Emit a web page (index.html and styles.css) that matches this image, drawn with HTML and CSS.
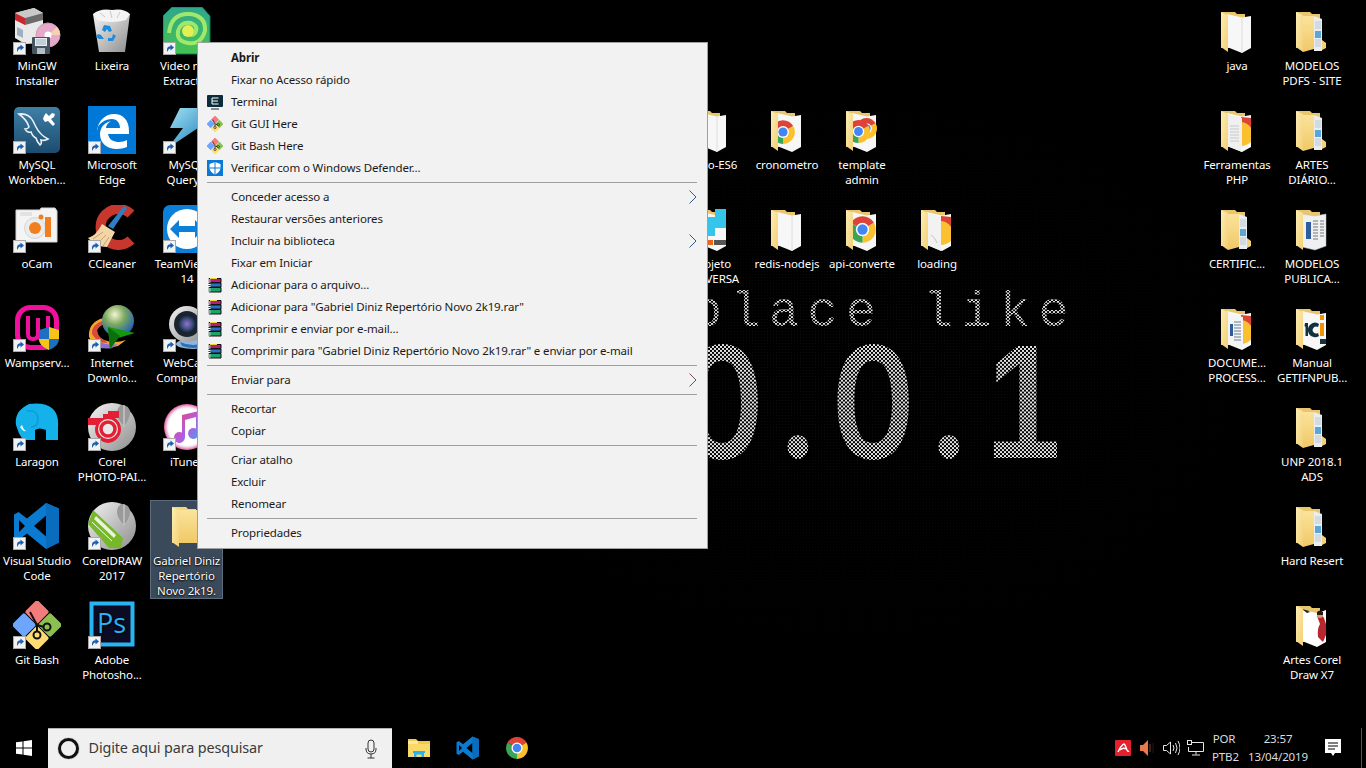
FILE: index.html
```html
<!DOCTYPE html>
<html lang="pt-BR">
<head>
    <meta charset="UTF-8" />
    <title>Área de Trabalho</title>
    <link rel="stylesheet" href="styles.css">
</head>
<body>
    <!-- icon sprite -->
    <svg class="sprite" aria-hidden="true">
        <defs>
            <linearGradient id="g-flap" x1="0" y1="0" x2="1" y2="1"><stop offset="0" stop-color="#fdeeb4"/><stop offset="1" stop-color="#f3cf74"/></linearGradient>
            <linearGradient id="g-mid" x1="0" y1="0" x2="0" y2="1"><stop offset="0" stop-color="#fbe39c"/><stop offset="1" stop-color="#f0c866"/></linearGradient>
            <linearGradient id="g-silver" x1="0" y1="0" x2="1" y2="1"><stop offset="0" stop-color="#f4f4f4"/><stop offset="1" stop-color="#8d8d8d"/></linearGradient>
            <linearGradient id="g-mysql" x1="0" y1="0" x2="0" y2="1"><stop offset="0" stop-color="#3f7fa6"/><stop offset="1" stop-color="#1c4c6f"/></linearGradient>
            <linearGradient id="g-bolt" x1="0" y1="0" x2="1" y2="1"><stop offset="0" stop-color="#a5e3f5"/><stop offset="1" stop-color="#1478b4"/></linearGradient>
            <linearGradient id="g-video" x1="0" y1="0" x2="0" y2="1"><stop offset="0" stop-color="#2fa68c"/><stop offset="1" stop-color="#45c34f"/></linearGradient>
            <radialGradient id="g-lens" cx=".5" cy=".5" r=".5"><stop offset="0" stop-color="#9a6fd0"/><stop offset=".6" stop-color="#3c4f7c"/><stop offset="1" stop-color="#16202e"/></radialGradient>
            <radialGradient id="g-globe" cx=".4" cy=".3" r=".8"><stop offset="0" stop-color="#f4f4d0"/><stop offset=".4" stop-color="#7aa860"/><stop offset=".8" stop-color="#2f6aa8"/><stop offset="1" stop-color="#1e3f78"/></radialGradient>
            <radialGradient id="g-tune" cx=".5" cy=".5" r=".5"><stop offset=".76" stop-color="#fff"/><stop offset=".84" stop-color="#f4f0f6"/><stop offset="1" stop-color="#e85aa0"/></radialGradient>
            <linearGradient id="g-note" x1="0" y1="0" x2="1" y2="1"><stop offset="0" stop-color="#f2486a"/><stop offset=".55" stop-color="#b25ae0"/><stop offset="1" stop-color="#42a5ef"/></linearGradient>
        </defs>

        <symbol id="sc" viewBox="0 0 48 48">
            <rect x="0.5" y="35.5" width="12" height="12" fill="#f2f2f2" stroke="#a9a9a9"/>
            <path d="M4 45v-2.500q0-3 3.500-3.200V37.500l3.500 3-3.500 3v-2q-2 .1-2.300 1.700z" fill="#1a5fb4"/>
        </symbol>

        <symbol id="chrome" viewBox="0 0 48 48">
            <path d="M24 24 5 13A22 22 0 0 1 43 13Z" fill="#db4437"/>
            <path d="M24 24 43 13A22 22 0 0 1 24 46Z" fill="#fbc02d"/>
            <path d="M24 24V46A22 22 0 0 1 5 13Z" fill="#3aa655"/>
            <circle cx="24" cy="24" r="11" fill="#fff"/>
            <circle cx="24" cy="24" r="8.500" fill="#4285f4"/>
        </symbol>

        <symbol id="git" viewBox="0 0 48 48">
            <g transform="rotate(45 24 24)">
                <rect x="6" y="6" width="17.500" height="17.500" rx="2" fill="#f27c7c"/>
                <rect x="24.500" y="6" width="17.500" height="17.500" rx="2" fill="#8cc152"/>
                <rect x="24.500" y="24.500" width="17.500" height="17.500" rx="2" fill="#ffdc73"/>
                <rect x="6" y="24.500" width="17.500" height="17.500" rx="2" fill="#6ea6ff"/>
            </g>
            <path d="M17 11 24 24l7 2M24 24v6" fill="none" stroke="#111" stroke-width="2"/>
            <circle cx="34" cy="26" r="3.500" fill="#8cc152" stroke="#111" stroke-width="2"/>
            <circle cx="24" cy="34" r="3.500" fill="#ffdc73" stroke="#111" stroke-width="2"/>
        </symbol>

        <symbol id="code" viewBox="0 0 48 48">
            <path fill-rule="evenodd" d="M33 1 46 6.500V40.500L33 47 14 31.500 5.500 38 1 35.500V12.500L5.500 10 14 16.500ZM33 13.500 21 24 33 34.500ZM6 18V30L12 24Z" fill="#0a7bd0"/>
            <path d="M33 1 46 6.500V40.500L33 47Z" fill="#0a6cbc"/>
        </symbol>

        <symbol id="rar" viewBox="0 0 16 16">
            <path d="M2 1.500h12v4H2z" fill="#b01e78" stroke="#111"/>
            <path d="M2 6h12v4H2z" fill="#2a6fc0" stroke="#111"/>
            <path d="M2 10.500h12v4.500H2z" fill="#1ea268" stroke="#111"/>
            <path d="M0.500 3h3M0.500 5h3M0.500 7.500h3M0.500 9.500h3M0.500 12h3M0.500 14h3" stroke="#fff" stroke-width="1"/>
            <path d="M3 1h7v1H3z" fill="#f2d23c"/>
        </symbol>

        <!-- folders: back, contents, front flap -->
        <symbol id="f-base" viewBox="0 0 48 48">
            <path d="M8 5h14l2 2h8v34H8z" fill="#e9c56c"/>
        </symbol>
        <symbol id="f-flap" viewBox="0 0 48 48">
            <path d="M8 5 15 8V45L8 40Z" fill="url(#g-flap)"/>
        </symbol>
        <symbol id="f-paper" viewBox="0 0 48 48">
            <use href="#f-base"/>
            <path d="M14 7 29 10.500 38 9V41L29 46 14 40Z" fill="#f7f7f7"/>
            <path d="M29 10.500V46" stroke="#dedede" fill="none"/>
            <use href="#f-flap"/>
        </symbol>
        <symbol id="f-strip" viewBox="0 0 48 48">
            <use href="#f-base"/>
            <path d="M26 9 34 12V44L26 44Z" fill="#e9edf0"/>
            <path d="M27 15h6M27 17h6M27 19h6M27 21h6" stroke="#b9c8d2"/>
            <path d="M27 24h6v7h-6z" fill="#5aa6d6"/>
            <path d="M27 33h6M27 35h6M27 37h6M27 39h6" stroke="#b9c8d2"/>
            <path d="M15 9h11V42L15 45Z" fill="url(#g-mid)"/>
            <path d="M34 33 38 36V41L34 43Z" fill="#f3d27a"/>
            <use href="#f-flap"/>
        </symbol>
        <symbol id="f-chrome" viewBox="0 0 48 48">
            <use href="#f-base"/>
            <path d="M14 7 29 10.500 38 9V41L29 46 14 40Z" fill="#f7f7f7"/>
            <use href="#chrome" x="10" y="10" width="29" height="29"/>
            <use href="#f-flap"/>
        </symbol>
        <symbol id="f-small" viewBox="0 0 48 48">
            <use href="#f-base"/>
            <path d="M14 7 29 10.500 38 9V41L29 46 14 40Z" fill="#f7f7f7"/>
            <use href="#chrome" x="7" y="13" width="26" height="26"/>
            <use href="#f-flap"/>
        </symbol>
        <symbol id="f-tmpl" viewBox="0 0 48 48">
            <use href="#f-base"/>
            <path d="M14 7 29 10.500 38 9V41L29 46 14 40Z" fill="#f7f7f7"/>
            <use href="#chrome" x="17" y="10" width="23" height="25"/>
            <use href="#chrome" x="8" y="13" width="25" height="25"/>
            <use href="#f-flap"/>
        </symbol>
        <symbol id="f-half" viewBox="0 0 48 48">
            <use href="#f-base"/>
            <path d="M14 7 29 10.500 38 9V41L29 46 14 40Z" fill="#f7f7f7"/>
            <path d="M28 14A13 13 0 0 1 38 22V36Q33 40 28 40Z" fill="#fbc02d"/>
            <path d="M28 11 38 12V22A13 13 0 0 0 28 16Z" fill="#db4437"/>
            <path d="M14 8 28 12V46L14 40Z" fill="#f2f2f2"/>
            <path d="M18 30q4 2 6 8" stroke="#c8c8c8" fill="none"/>
            <use href="#f-flap"/>
        </symbol>
        <symbol id="f-doc" viewBox="0 0 48 48">
            <use href="#f-base"/>
            <path d="M14 9 27 11 38 9V41L27 45 14 42Z" fill="#eef0f2" stroke="#bbb" stroke-width=".5"/>
            <path d="M18 17h5v17h-5z" fill="#2f5d9c"/>
            <path d="M25 16h5M25 19h5M25 22h5M25 25h5M25 28h5M25 31h5M25 34h5M32 16h4M32 19h4M32 22h4M32 25h4M32 28h4M32 31h4" stroke="#787878"/>
            <use href="#f-flap"/>
        </symbol>
        <symbol id="f-docc" viewBox="0 0 48 48">
            <use href="#f-base"/>
            <path d="M14 7 29 10.500 38 9V41L29 46 14 40Z" fill="#f7f7f7"/>
            <path d="M28 14A13 13 0 0 1 38 22V36Q33 40 28 40Z" fill="#fbc02d"/>
            <path d="M28 11 38 12V22A13 13 0 0 0 28 16Z" fill="#db4437"/>
            <path d="M14 10 30 13V44L14 40Z" fill="#f2f4f6"/>
            <path d="M17 20h3v12h-3z" fill="#2f5d9c"/>
            <path d="M21 18h7M21 21h7M21 24h7M21 27h7M21 30h7M21 33h7M21 36h7" stroke="#6f7f90"/>
            <use href="#f-flap"/>
        </symbol>
        <symbol id="f-php" viewBox="0 0 48 48">
            <use href="#f-base"/>
            <path d="M14 7 29 10.500 38 9V41L29 46 14 40Z" fill="#f7f7f7"/>
            <path d="M28 14A13 13 0 0 1 38 22V36Q33 40 28 40Z" fill="#fbc02d"/>
            <path d="M28 11 38 12V22A13 13 0 0 0 28 16Z" fill="#db4437"/>
            <path d="M14 8 29 12V46L14 40Z" fill="#f0f0f0"/>
            <path d="M17 20h9M17 23h9M17 26h9M17 29h9M17 32h9M17 35h9" stroke="#c8c8c8"/>
            <use href="#f-flap"/>
        </symbol>
        <symbol id="f-logo" viewBox="0 0 48 48">
            <use href="#f-base"/>
            <path d="M14 7 29 10.500 38 9V41L29 46 14 40Z" fill="#f7f7f7"/>
            <path d="M17 19h3V32h-2.500V23l-1-1zM23 20a6 6 0 0 1 8 0l-1 3a3.500 3.500 0 1 0 0 6l1 3a6 6 0 0 1-8-12z" fill="#12313f"/>
            <path d="M32 11h4v5h-4zM32 19h4V32h-4z" fill="#f39200"/>
            <path d="M32 35h6v5h-6z" fill="#12313f"/>
            <use href="#f-flap"/>
        </symbol>
        <symbol id="f-girl" viewBox="0 0 48 48">
            <use href="#f-base"/>
            <path d="M14 9 29 12 38 9V41L29 46 14 40Z" fill="#fff"/>
            <path d="M29 15q5-3 7 2l2 6V34L35 41 30 36Q29 28 32 23Z" fill="#b8272d"/>
            <circle cx="32" cy="14" r="3" fill="#d79d7b"/>
            <path d="M29 11q3-3 6 0v3h-6z" fill="#2a1a14"/>
            <path d="M14 8q5 1 8 3l-3 1z" fill="#222"/>
            <use href="#f-flap"/>
        </symbol>
        <symbol id="f-plus" viewBox="0 0 48 48">
            <use href="#f-base"/>
            <path d="M14 7 29 10.500 38 9V41L29 46 14 40Z" fill="#f7f7f7"/>
            <path d="M15 12h12V4h11v8v11H27v8H15z" fill="#36c5ea"/>
            <path d="M17 35h8v5h-8z" fill="#e9651b"/>
            <path d="M26 35h12v5H26z" fill="#555"/>
            <use href="#f-flap"/>
        </symbol>
    </svg>

    <!-- wallpaper -->
    <div class="wallpaper">
        <div class="wall-dust"></div>
        <div class="wall-small dots">place like</div>
        <div class="wall-big">
            <span class="dots">0</span>
            <span class="dots">.</span>
            <span class="dots">0</span>
            <span class="dots">.</span>
            <span class="dots">1</span>
        </div>
    </div>

    <!-- icones da area de trabalho -->
    <main class="desktop">
        <!-- coluna 1 -->
        <div class="item c0 r0"><svg class="ico" viewBox="0 0 48 48">
            <path d="M2 6 21 1 30 6V36L12 37 2 31Z" fill="#e9e9e9"/><path d="M2 6 21 1 30 6 12 11Z" fill="#c9c9c9"/><path d="M2 6 12 11V18L2 13Z" fill="#c9272d"/><path d="M12 11 30 6V13L12 18Z" fill="#6c6c6c"/><path d="M4 20l6 3v8l-6-3z" fill="#9fb0c0"/>
            <circle cx="35" cy="28" r="12" fill="#e7a9c9"/><circle cx="35" cy="28" r="12" fill="none" stroke="#c9a0b4"/><path d="M35 28 44 20A12 12 0 0 1 47 28Z" fill="#f6d2b0"/><circle cx="35" cy="28" r="3.500" fill="#fff"/>
            <rect x="19" y="30" width="18" height="17" rx="1" fill="#46545f"/><rect x="22" y="31" width="12" height="8" fill="#e8eef2"/><path d="M23 33h10M23 35h10M23 37h10" stroke="#9db0bc"/><rect x="24" y="41" width="8" height="6" fill="#b5bec4"/>
            <use href="#sc"/></svg><span>MinGW<br>Installer</span></div>
        <div class="item c0 r1"><svg class="ico" viewBox="0 0 48 48">
            <rect x="1" y="1" width="46" height="46" rx="5" fill="url(#g-mysql)"/>
            <path d="M6 8q10-1 14 7l3 6q4 8 12 12-3 2-7 1 1 4-1 5-3-3-4-7-3-1-5-6-4 1-6-3 3 0 4-2Q14 14 6 8Z" fill="none" stroke="#e8f1f6" stroke-width="1.600"/>
            <path d="M33 7l3 3 3-3 3 1-1 3-3 2 4 5-2 2-5-5-3 1-2-3 1-3z" fill="#fff"/>
            <use href="#sc"/></svg><span>MySQL<br>Workben...</span></div>
        <div class="item c0 r2"><svg class="ico" viewBox="0 0 48 48">
            <path d="M3 5H27l1-2H42l2 3V37H3Z" fill="#f4f4f4" stroke="#d4d4d4"/>
            <rect x="7" y="7" width="12" height="4" fill="#e2e2e2"/><circle cx="22" cy="23" r="10.500" fill="#ececec" stroke="#d6d6d6"/><circle cx="22" cy="23" r="6" fill="#f07f1f"/><circle cx="28" cy="12" r="2.500" fill="#f07f1f"/><rect x="32" y="12" width="6" height="20" fill="#f07f1f"/>
            <use href="#sc"/></svg><span>oCam</span></div>
        <div class="item c0 r3"><svg class="ico" viewBox="0 0 48 48">
            <rect x="4.500" y="3.500" width="39" height="40" rx="13" fill="none" stroke="#f0109c" stroke-width="5"/>
            <path d="M15 12V30Q15 35 20 35 25 35 25 30V14M25 30Q25 35 30 35 35 35 35 30V12" fill="none" stroke="#f0109c" stroke-width="4"/>
            <path d="M36 23l10 3v9q0 7-10 11-10-4-10-11v-9z" fill="#1d6fc4"/><path d="M36 23l10 3v9H36zM26 35H36V46q-10-4-10-11z" fill="#f5c518"/>
            <use href="#sc"/></svg><span>Wampserv...</span></div>
        <div class="item c0 r4"><svg class="ico" viewBox="0 0 48 48">
            <path d="M16 1Q32-1 40 6 46 12 45 24V37H33V27Q26 24 22 27V37H10Q5 30 3 22 1 8 16 1Z" fill="#14b1ea"/>
            <path d="M14 8Q24 6 25 16 25 24 18 24" fill="none" stroke="#0f9bd3" stroke-width="1.500"/>
            <path d="M7 24q3 5 6 4-3-2-4-6z" fill="#e9f8fd"/>
            <use href="#sc"/></svg><span>Laragon</span></div>
        <div class="item c0 r5"><svg class="ico" viewBox="0 0 48 48"><use href="#code"/><use href="#sc"/></svg><span>Visual Studio<br>Code</span></div>
        <div class="item c0 r6"><svg class="ico" viewBox="0 0 48 48"><use href="#git"/><use href="#sc"/></svg><span>Git Bash</span></div>

        <!-- coluna 2 -->
        <div class="item c1 r0"><svg class="ico" viewBox="0 0 48 48">
            <path d="M5 7 42 7 37 45H11Z" fill="url(#g-silver)"/>
            <path d="M5 7Q12 1 24 3 36 1 42 7L38 13Q24 17 9 13Z" fill="#f4f4f4"/><path d="M12 6l5 4M22 4l2 7M32 5l-3 6" stroke="#c8c8c8"/>
            <path d="M16 18l6 1 2 5-3 1-2-3-2 3-3-2zM10 27l3 1 3 4h-5l-3-2zM25 27l3 2-3 5h-5v-3h4z" fill="#1d8be0"/>
            </svg><span>Lixeira</span></div>
        <div class="item c1 r1"><svg class="ico" viewBox="0 0 48 48">
            <rect width="48" height="48" fill="#0078d7"/>
            <path d="M9 25C10 14 18 8 26 8c9 0 15 6 15 17v3H20c1 6 6 8 11 8 3 0 6-1 8-2v7c-3 1-7 2-10 2-10 0-17-6-17-15 0-3 1-5 2-7 2-3 5-5 9-6-3 2-5 4-5 7h14c0-5-3-9-8-9-7 0-12 4-15 9Z" fill="#fff"/>
            <use href="#sc"/></svg><span>Microsoft<br>Edge</span></div>
        <div class="item c1 r2"><svg class="ico" viewBox="0 0 48 48">
            <path d="M43 9A18 18 0 1 0 43 35" fill="none" stroke="#c8372d" stroke-width="10"/>
            <path d="M36 1 39 3 25 24 20 21Z" fill="#2d7ec5"/>
            <path d="M14 19 27 27 19 42Q8 42 0 33 8 31 14 19Z" fill="#f4d5a7"/><path d="M5 34 15 27M10 38 18 30M15 41 21 32" stroke="#c9a16a"/>
            <use href="#sc"/></svg><span>CCleaner</span></div>
        <div class="item c1 r3"><svg class="ico" viewBox="0 0 48 48">
            <path d="M1 33Q0 20 12 15 18 13 24 14V19Q12 19 9 26 9 33 16 36 26 40 38 36L30 42Q14 46 5 40Z" fill="#f2a72c"/><path d="M4 30Q3 21 14 17 19 16 24 16V19Q12 19 9 26 9 33 16 36L20 39Q9 39 4 30Z" fill="#d94b3a"/><path d="M2 35 12 38Q20 42 30 40L24 44Q12 46 5 40Z" fill="#8c6fd6"/>
            <circle cx="30" cy="17" r="16" fill="url(#g-globe)"/>
            <path d="M20 23 47 29 30 34 22 45Z" fill="#119a0d"/><path d="M20 23 32 32 22 45Z" fill="#0b6f0b"/>
            <use href="#sc"/></svg><span>Internet<br>Downlo...</span></div>
        <div class="item c1 r4"><svg class="ico" viewBox="0 0 48 48">
            <circle cx="24" cy="24" r="24" fill="url(#g-silver)"/>
            <path d="M33 2q9 0 9 8 0 6-6 13-7-7-7-13 0-5 4-8Z" fill="#9a9a9a"/><path d="M36 2v21" stroke="#dcdcdc"/>
            <path d="M0 15H15V11H20V8H31V15H27A14 14 0 0 1 33 26 14 14 0 0 1 20 40 14 14 0 0 1 7 26Q7 24 8 22H0Z" fill="#e21f35"/><circle cx="20" cy="26" r="10" fill="#e8e8e8"/><circle cx="20" cy="26" r="7" fill="none" stroke="#e21f35" stroke-width="3.500"/>
            <use href="#sc"/></svg><span>Corel<br>PHOTO-PAI...</span></div>
        <div class="item c1 r5"><svg class="ico" viewBox="0 0 48 48">
            <circle cx="24" cy="24" r="24" fill="url(#g-silver)"/>
            <path d="M33 2q9 0 9 8 0 6-6 13-7-7-7-13 0-5 4-8Z" fill="#9a9a9a"/><path d="M36 2v21" stroke="#dcdcdc"/>
            <path d="M5 8 35 36 33 46 21 46 0 22Z" fill="#76b82a"/><path d="M8 14 28 33 26 36 6 17Z" fill="#e9f4d8"/><path d="M4 20 24 39" stroke="#fff" stroke-width="1"/>
            <use href="#sc"/></svg><span>CorelDRAW<br>2017</span></div>
        <div class="item c1 r6"><svg class="ico" viewBox="0 0 48 48">
            <rect x="3.500" y="2.500" width="41" height="41" fill="#0b0b24" stroke="#2ab2f2" stroke-width="4"/>
            <text x="9" y="32" class="ps">Ps</text>
            <use href="#sc"/></svg><span>Adobe<br>Photosho...</span></div>

        <!-- coluna 3 -->
        <div class="item c2 r0"><svg class="ico" viewBox="0 0 48 48">
            <path d="M9 0H39L47 9V39L39 47H9L0 39V9Z" fill="url(#g-video)" stroke="#0d7f63"/>
            <path d="M6 26Q8 6 27 7 43 9 42 24 38 38 25 36 13 34 15 24 18 14 28 16 36 19 32 26 28 30 25 26" fill="none" stroke="#9fe86c" stroke-width="4"/>
            <circle cx="25" cy="24" r="6" fill="#e4ef52"/>
            <use href="#sc"/></svg><span>Video rem<br>Extractor</span></div>
        <div class="item c2 r1"><svg class="ico" viewBox="0 0 48 48">
            <path d="M17 2H48L34 16H44L5 42 20 22H7Z" fill="url(#g-bolt)"/>
            <use href="#sc"/></svg><span>MySQL<br>Query...</span></div>
        <div class="item c2 r2"><svg class="ico" viewBox="0 0 48 48">
            <rect x="0" y="0" width="48" height="48" rx="7" fill="#0c7fd8"/><circle cx="24" cy="24" r="20" fill="#fff"/>
            <path d="M7 24 16 15V21H32V15L41 24 32 33V27H16V33Z" fill="#0c7fd8"/>
            <use href="#sc"/></svg><span>TeamViewer<br>14</span></div>
        <div class="item c2 r3"><svg class="ico" viewBox="0 0 48 48">
            <ellipse cx="30" cy="40" rx="17" ry="5" fill="#8fb6e0"/><path d="M17 38q13 6 27 0l-2 4q-12 4-23 0z" fill="#2f6fb4"/>
            <circle cx="24" cy="20" r="18" fill="url(#g-silver)"/><circle cx="24" cy="20" r="13" fill="#1a2430"/><circle cx="24" cy="20" r="9" fill="url(#g-lens)"/>
            <use href="#sc"/></svg><span>WebCam<br>Companion</span></div>
        <div class="item c2 r4"><svg class="ico" viewBox="0 0 48 48">
            <circle cx="24" cy="24" r="23" fill="url(#g-tune)"/>
            <path d="M19 12 36 8V30a5.500 5.500 0 1 1-3-4.500V14L22 17V34a5.500 5.500 0 1 1-3-4.500Z" fill="url(#g-note)"/>
            <use href="#sc"/></svg><span>iTunes</span></div>
        <div class="item c2 r5 selected"><svg class="ico" viewBox="0 0 48 48">
            <path d="M9 5h14l2 2h8v34H9z" fill="#f5d680"/><path d="M16 8h24v33H16z" fill="url(#g-mid)"/><path d="M9 5 16 8V45L9 40Z" fill="url(#g-flap)"/>
            </svg><span>Gabriel Diniz<br>Repertório<br>Novo 2k19.</span></div>

        <!-- centro -->
        <div class="item c9 r1"><svg class="ico" viewBox="0 0 48 48"><use href="#f-paper"/></svg><span>Novo-ES6</span></div>
        <div class="item c9 r2"><svg class="ico" viewBox="0 0 48 48"><use href="#f-plus"/></svg><span>Projeto<br>UNIVERSA</span></div>
        <div class="item c10 r1"><svg class="ico" viewBox="0 0 48 48"><use href="#f-small"/></svg><span>cronometro</span></div>
        <div class="item c10 r2"><svg class="ico" viewBox="0 0 48 48"><use href="#f-paper"/></svg><span>redis-nodejs</span></div>
        <div class="item c11 r1"><svg class="ico" viewBox="0 0 48 48"><use href="#f-tmpl"/></svg><span>template<br>admin</span></div>
        <div class="item c11 r2"><svg class="ico" viewBox="0 0 48 48"><use href="#f-chrome"/></svg><span>api-converte</span></div>
        <div class="item c12 r2"><svg class="ico" viewBox="0 0 48 48"><use href="#f-half"/></svg><span>loading</span></div>

        <!-- direita -->
        <div class="item c16 r0"><svg class="ico" viewBox="0 0 48 48"><use href="#f-paper"/></svg><span>java</span></div>
        <div class="item c16 r1"><svg class="ico" viewBox="0 0 48 48"><use href="#f-php"/></svg><span>Ferramentas<br>PHP</span></div>
        <div class="item c16 r2"><svg class="ico" viewBox="0 0 48 48"><use href="#f-strip"/></svg><span>CERTIFIC...</span></div>
        <div class="item c16 r3"><svg class="ico" viewBox="0 0 48 48"><use href="#f-docc"/></svg><span>DOCUME...<br>PROCESS...</span></div>
        <div class="item c17 r0"><svg class="ico" viewBox="0 0 48 48"><use href="#f-strip"/></svg><span>MODELOS<br>PDFS - SITE</span></div>
        <div class="item c17 r1"><svg class="ico" viewBox="0 0 48 48"><use href="#f-strip"/></svg><span>ARTES<br>DIÁRIO...</span></div>
        <div class="item c17 r2"><svg class="ico" viewBox="0 0 48 48"><use href="#f-doc"/></svg><span>MODELOS<br>PUBLICA...</span></div>
        <div class="item c17 r3"><svg class="ico" viewBox="0 0 48 48"><use href="#f-logo"/></svg><span>Manual<br>GETIFNPUB...</span></div>
        <div class="item c17 r4"><svg class="ico" viewBox="0 0 48 48"><use href="#f-strip"/></svg><span>UNP 2018.1<br>ADS</span></div>
        <div class="item c17 r5"><svg class="ico" viewBox="0 0 48 48"><use href="#f-strip"/></svg><span>Hard Resert</span></div>
        <div class="item c17 r6"><svg class="ico" viewBox="0 0 48 48"><use href="#f-girl"/></svg><span>Artes Corel<br>Draw X7</span></div>
    </main>

    <!-- menu de contexto -->
    <nav class="menu">
        <div class="mi bold">Abrir</div>
        <div class="mi">Fixar no Acesso rápido</div>
        <div class="mi"><svg class="mico" viewBox="0 0 16 16"><rect y="1" width="16" height="12" rx="1" fill="#0b2d39"/><path d="M11.500 4H5v6h6.500M5 7h6" fill="none" stroke="#fff"/><path d="M4 15h8" stroke="#0b2d39"/></svg>Terminal</div>
        <div class="mi"><svg class="mico" viewBox="0 0 48 48"><use href="#git"/></svg>Git GUI Here</div>
        <div class="mi"><svg class="mico" viewBox="0 0 48 48"><use href="#git"/></svg>Git Bash Here</div>
        <div class="mi"><svg class="mico" viewBox="0 0 16 16"><rect width="16" height="16" fill="#0a78d7"/><path d="M8 2 13.500 4V8Q13 12 8 14.500 3 12 2.500 8V4Z" fill="#fff"/><path d="M8 2V14.500M2.500 8H13.500" stroke="#0a78d7"/></svg>Verificar com o Windows Defender...</div>
        <hr class="sep">
        <div class="mi">Conceder acesso a<svg class="arr" viewBox="0 0 8 14"><path d="M.5.5 7 7 .5 13.500" /></svg></div>
        <div class="mi">Restaurar versões anteriores</div>
        <div class="mi">Incluir na biblioteca<svg class="arr" viewBox="0 0 8 14"><path d="M.5.5 7 7 .5 13.500" /></svg></div>
        <div class="mi">Fixar em Iniciar</div>
        <div class="mi"><svg class="mico" viewBox="0 0 16 16"><use href="#rar"/></svg>Adicionar para o arquivo...</div>
        <div class="mi"><svg class="mico" viewBox="0 0 16 16"><use href="#rar"/></svg>Adicionar para "Gabriel Diniz Repertório Novo 2k19.rar"</div>
        <div class="mi"><svg class="mico" viewBox="0 0 16 16"><use href="#rar"/></svg>Comprimir e enviar por e-mail...</div>
        <div class="mi"><svg class="mico" viewBox="0 0 16 16"><use href="#rar"/></svg>Comprimir para "Gabriel Diniz Repertório Novo 2k19.rar" e enviar por e-mail</div>
        <hr class="sep">
        <div class="mi">Enviar para<svg class="arr arr-red" viewBox="0 0 8 14"><path d="M.5.5 7 7 .5 13.500" /></svg></div>
        <hr class="sep">
        <div class="mi">Recortar</div>
        <div class="mi">Copiar</div>
        <hr class="sep">
        <div class="mi">Criar atalho</div>
        <div class="mi">Excluir</div>
        <div class="mi">Renomear</div>
        <hr class="sep">
        <div class="mi">Propriedades</div>
    </nav>

    <!-- barra de tarefas -->
    <footer class="taskbar">
        <div class="start"><svg width="16" height="16" viewBox="0 0 16 16"><path d="M0 2.300 6.500 1.400V7.500H0ZM7.500 1.200 16 0V7.500H7.500ZM0 8.500H6.500V14.600L0 13.700ZM7.500 8.500H16V16L7.500 14.800Z" fill="#fff"/></svg></div>
        <div class="search">
            <span class="cortana"></span>
            <span class="search-text">Digite aqui para pesquisar</span>
            <svg class="mic" width="12" height="20" viewBox="0 0 12 20"><rect x="3" y="1" width="6" height="12" rx="3" fill="none" stroke="#333"/><path d="M1 9v1q0 5 5 5t5-5V9M6 15v4M2.500 19h7" fill="none" stroke="#333"/></svg>
        </div>
        <div class="apps">
            <svg width="24" height="24" viewBox="0 0 24 24"><path d="M1 3H9L11 5H23V21H1Z" fill="#f2c94c"/><path d="M1 5H11V8H1Z" fill="#fdeaa6"/><path d="M1 8H23V21H1Z" fill="#fbd968"/><path d="M7 21V16H17V21H14.500V18.500H9.500V21Z" fill="#2ab0ee"/><path d="M6 15H18V17H6Z" fill="#2ab0ee"/></svg>
            <svg width="24" height="24" viewBox="0 0 48 48"><use href="#code"/></svg>
            <svg width="24" height="24" viewBox="0 0 48 48"><use href="#chrome"/></svg>
        </div>
        <div class="tray">
            <svg class="t-avira" width="16" height="16" viewBox="0 0 16 16"><rect width="16" height="16" rx="1" fill="#e3202c"/><path d="M3 12Q5 7 8 4.500 9.500 3.500 10 5L12 10Q13 12 14 11M5 10Q8 7 11 9" fill="none" stroke="#fff" stroke-width="1.500"/></svg>
            <svg class="t-spk" width="14" height="16" viewBox="0 0 14 16"><path d="M0 5H3L8 0V16L3 11H0Z" fill="#e87a4c"/><path d="M10 4v8" stroke="#5a2a18" stroke-width="1.500"/><path d="M13 3v10" stroke="#2a1410"/></svg>
            <svg class="t-vol" width="17" height="16" viewBox="0 0 17 16"><path d="M.5 5.500H3.500L7.500 2V14L3.500 10.500H.5Z" fill="none" stroke="#e6e6e6"/><path d="M10 5q2 3 0 6M12.500 3q3 5 0 10M15 1q4 7 0 14" fill="none" stroke="#e6e6e6"/></svg>
            <svg class="t-net" width="17" height="16" viewBox="0 0 17 16"><path d="M4.500 2.500H16.500V11.500H1.500V7M9 11.500V14.500M5 15H13" fill="none" stroke="#e6e6e6"/><rect x=".5" y=".5" width="4" height="4" fill="#000" stroke="#e6e6e6"/></svg>
            <div class="lang">POR<br>PTB2</div>
            <div class="clock">23:57<br>13/04/2019</div>
            <svg class="t-note" width="16" height="18" viewBox="0 0 16 18"><path d="M0 0H16V14H10L8 17 6 14H0Z" fill="#fff"/><path d="M3 4H13M3 7H13M3 10H10" stroke="#000"/></svg>
            <div class="show-desk"></div>
        </div>
    </footer>
</body>
</html>
```
FILE: styles.css
```css
/* pagina */
html, body {
    margin: 0;
    padding: 0;
    height: 768px;
    overflow: hidden;
}

body {
    position: relative;
    display: flex;
    flex-direction: column;
    width: 1366px;
    background-color: #000;
    color: #fff;
    font-family: "Noto Sans", "Open Sans", sans-serif;
    font-size: 11.5px;
    letter-spacing: -0.13px;
}

.sprite {
    position: absolute;
    width: 0;
    height: 0;
}

/* wallpaper */
.wallpaper {
    position: absolute;
    inset: 0;
    overflow: hidden;
}

.wall-dust {
    position: absolute;
    left: 400px;
    top: 60px;
    width: 900px;
    height: 620px;
    background-image: radial-gradient(circle, #fff 0.7px, transparent 1px);
    background-size: 3px 3px;
    opacity: 0.05;
    -webkit-mask-image: radial-gradient(ellipse at center, #000 10%, transparent 68%);
    mask-image: radial-gradient(ellipse at center, #000 10%, transparent 68%);
}

.dots {
    color: transparent;
    background-image:
        radial-gradient(circle, #e2e2e2 0.8px, transparent 1.1px),
        radial-gradient(circle, #e2e2e2 0.8px, transparent 1.1px);
    background-size: 4px 3.4px;
    background-position: 0 0, 2px 1.7px;
    -webkit-background-clip: text;
    background-clip: text;
}

.wall-small {
    position: absolute;
    right: 289px;
    top: 290px;
    white-space: nowrap;
    font-family: "Liberation Mono", monospace;
    font-size: 50px;
    line-height: 46px;
    letter-spacing: 8.5px;
}

.wall-big {
    position: absolute;
    left: 684.5px;
    top: 342.7px;
    display: flex;
    font-family: "Inter", sans-serif;
    font-size: 132px;
    line-height: 100px;
    font-weight: 600;
    letter-spacing: 0;
    font-feature-settings: "tnum";
    transform: scaleY(1.17);
    transform-origin: top left;
}

.wall-big span {
    width: 75.5px;
    display: flex;
    justify-content: center;
}

/* icones */
.desktop {
    position: relative;
    flex: 1;
    display: grid;
    grid-template-columns: repeat(18, 75px);
    grid-template-rows: repeat(7, 99px);
    padding-top: 5px;
}

.item {
    display: flex;
    flex-direction: column;
    align-items: center;
    box-sizing: border-box;
    padding-top: 2px;
    padding-right: 1px;
    text-align: center;
    line-height: 15px;
    white-space: nowrap;
    text-shadow: 0 1px 2px #000, 0 0 1px #000;
}

.ico {
    width: 48px;
    height: 48px;
    margin-bottom: 3px;
    flex: none;
}

.selected {
    width: 73px;
    padding-top: 1px;
    padding-right: 0;
    background-color: #3b4a5a;
    border: 1px solid #5b6c7d;
}

.ps {
    font-family: "Open Sans", sans-serif;
    font-size: 27px;
    font-weight: 500;
    letter-spacing: 0;
    fill: #2ab2f2;
}

.c0 { grid-column: 1; }
.c1 { grid-column: 2; }
.c2 { grid-column: 3; }
.c9 { grid-column: 10; }
.c10 { grid-column: 11; }
.c11 { grid-column: 12; }
.c12 { grid-column: 13; }
.c16 { grid-column: 17; }
.c17 { grid-column: 18; }

.r0 { grid-row: 1; }
.r1 { grid-row: 2; }
.r2 { grid-row: 3; }
.r3 { grid-row: 4; }
.r4 { grid-row: 5; }
.r5 { grid-row: 6; }
.r6 { grid-row: 7; }

/* menu de contexto */
.menu {
    position: absolute;
    left: 197px;
    top: 42px;
    width: 509px;
    padding: 4px 0;
    background-color: #f2f2f2;
    border: 1px solid #a0a0a0;
    color: #1a1a1a;
}

.mi {
    position: relative;
    height: 22px;
    line-height: 22px;
    padding-left: 33px;
    white-space: nowrap;
}

.bold {
    font-weight: bold;
}

.mico {
    position: absolute;
    left: 9px;
    top: 3px;
    width: 16px;
    height: 16px;
}

.arr {
    position: absolute;
    right: 10px;
    top: 4px;
    width: 8px;
    height: 14px;
    fill: none;
    stroke: #2d5c8c;
}

.arr-red {
    stroke: #7a4a5c;
}

.sep {
    height: 1px;
    margin: 3px 10px 3px 9px;
    border: 0;
    background-color: #a0a0a0;
}

/* barra de tarefas */
.taskbar {
    position: relative;
    display: flex;
    align-items: stretch;
    height: 40px;
    flex: none;
    background-color: #000;
}

.start {
    flex: none;
    width: 48px;
    display: flex;
    align-items: center;
    justify-content: center;
}

.search {
    flex: none;
    width: 344px;
    display: flex;
    align-items: center;
    background-color: #f0f0f0;
    color: #333;
    border-top: 1px solid #b4b4b4;
    box-sizing: border-box;
}

.cortana {
    width: 15px;
    height: 15px;
    margin-left: 10px;
    border: 3px solid #111;
    border-radius: 50%;
    box-shadow: 0 0 1px #555;
}

.search-text {
    margin-left: 9.5px;
    margin-top: -2px;
    font-size: 14.4px;
    color: #3a3a3a;
}

.mic {
    margin-left: auto;
    margin-right: 15px;
}

.apps {
    flex: none;
    display: flex;
    align-items: center;
    gap: 25px;
    padding-left: 14.5px;
}

.tray {
    margin-left: auto;
    display: flex;
    align-items: center;
    color: #dcdcdc;
    line-height: 18px;
    text-align: center;
    padding-right: 4px;
}

.t-avira { margin-right: 9px; }
.t-spk { margin-right: 9px; }
.t-vol { margin-right: 7px; }
.t-net { margin-right: 8px; }

.lang {
    width: 24px;
}

.clock {
    width: 62px;
    margin-left: 11px;
}

.t-note {
    margin-left: 16px;
}

.show-desk {
    align-self: stretch;
    width: 1px;
    margin-left: 20px;
    background-color: #555;
}
```
